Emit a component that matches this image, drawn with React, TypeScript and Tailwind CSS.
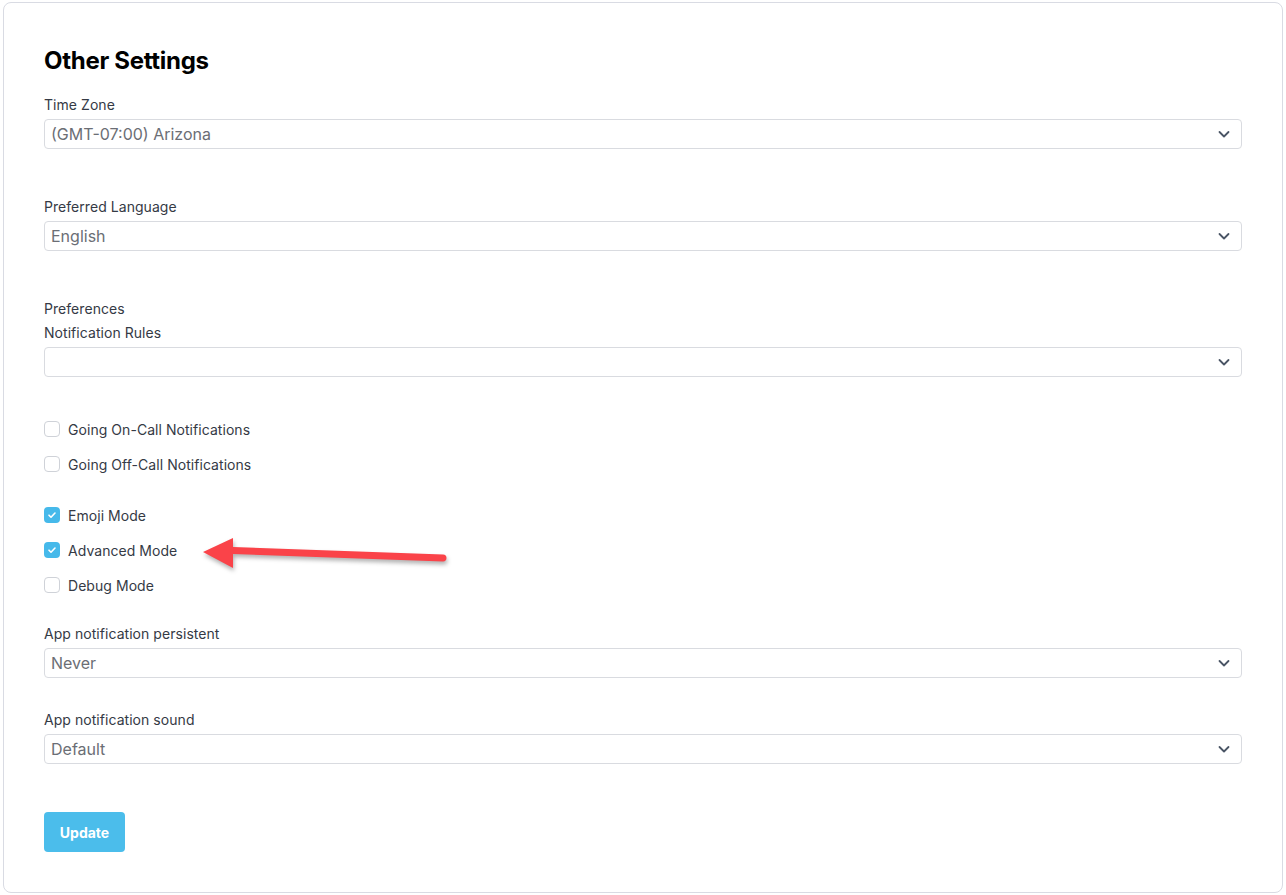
import * as React from 'react'

function Chevron() {
	return (
		<svg width="14" height="14" viewBox="0 0 14 14" fill="none" className="text-gray-600">
			<path d="M2.5 5l4.5 4.5L11.5 5" stroke="currentColor" strokeWidth="1.8" strokeLinecap="round" strokeLinejoin="round"/>
		</svg>
	)
}

function Select({value}: {value: string}) {
	return (
		<div className="h-[30px] border border-[#d9dbe0] rounded-[4px] bg-white flex items-center justify-between pl-[6px] pr-[10px]">
			<span className="text-[16px] text-[#6b6e75]">{value}</span>
			<Chevron/>
		</div>
	)
}

function Label({children}: {children: React.ReactNode}) {
	return <p className="text-[14px] leading-5 text-[#353a45] tracking-[0.05px]">{children}</p>
}

function Checkbox({label, checked}: {label: string; checked?: boolean}) {
	return (
		<div className="flex items-center gap-2 h-5">
			{checked ? (
				<div className="w-4 h-4 rounded-[4px] bg-[#46b9ea] flex items-center justify-center">
					<svg width="10" height="10" viewBox="0 0 10 10" fill="none">
						<path d="M2 5.2l2 2L8 3" stroke="white" strokeWidth="1.6" strokeLinecap="round" strokeLinejoin="round"/>
					</svg>
				</div>
			) : (
				<div className="w-4 h-4 rounded-[4px] border border-[#cfd2d8] bg-white"/>
			)}
			<span className="text-[14px] text-[#353a45] tracking-[0.05px]">{label}</span>
		</div>
	)
}

export default function App() {
	return (
		<div className="bg-white min-h-[895px] pt-[2px] px-[3px] font-['Inter',sans-serif]">
			<div className="relative border border-[#d9dbe3] rounded-lg bg-white pt-[44px] pb-[40px] pl-[40px] pr-[40px]">
				<h1 className="text-[24px] leading-7 font-bold text-black tracking-[-0.3px]">Other Settings</h1>

				<div className="mt-[20px]">
					<Label>Time Zone</Label>
					<div className="mt-1"><Select value="(GMT-07:00) Arizona"/></div>
				</div>

				<div className="mt-[48px]">
					<Label>Preferred Language</Label>
					<div className="mt-1"><Select value="English"/></div>
				</div>

				<div className="mt-[48px]">
					<Label>Preferences</Label>
					<div className="mt-1"><Label>Notification Rules</Label></div>
					<div className="mt-1"><Select value=""/></div>
				</div>

				<div className="mt-[42px] flex flex-col gap-[15px]">
					<Checkbox label="Going On-Call Notifications"/>
					<Checkbox label="Going Off-Call Notifications"/>
				</div>

				<div className="mt-[31px] flex flex-col gap-[15px]">
					<Checkbox label="Emoji Mode" checked/>
					<Checkbox label="Advanced Mode" checked/>
					<Checkbox label="Debug Mode"/>
				</div>

				<div className="mt-[29px]">
					<Label>App notification persistent</Label>
					<div className="mt-1"><Select value="Never"/></div>
				</div>

				<div className="mt-[32px]">
					<Label>App notification sound</Label>
					<div className="mt-1"><Select value="Default"/></div>
				</div>

				<button className="mt-[48px] h-10 w-[81px] rounded-[4px] bg-[#4bbdeb] text-white text-[14px] font-bold">Update</button>

				<svg className="absolute left-[193px] top-[530px] drop-shadow-[1px_3px_2px_rgba(0,0,0,0.3)]" width="256" height="44" viewBox="0 0 256 44" fill="none">
					<path d="M36 17.5L246 25" stroke="#fa4349" strokeWidth="7" strokeLinecap="round"/>
					<path d="M6 19L36 5L36 35Z" fill="#fa4349"/>
				</svg>
			</div>
		</div>
	)
}
